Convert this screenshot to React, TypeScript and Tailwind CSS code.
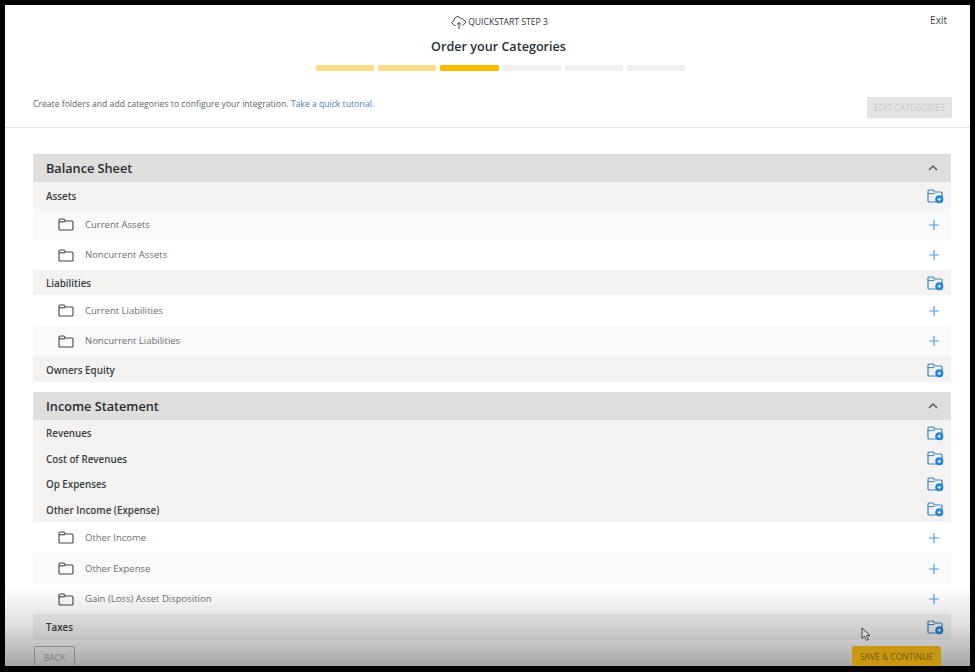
const font = { fontFamily: '"Open Sans", "Noto Sans", sans-serif' };

function Folder() {
  return (
    <svg width="16" height="13" viewBox="0 0 16 13" fill="none" stroke="#444" strokeWidth="1.1" className="shrink-0">
      <path d="M1 11V2.2C1 1.5 1.5 1 2.2 1h3.2c.6 0 1 .3 1.2 .8l.5 1.2h6.7c.7 0 1.2 .5 1.2 1.2V11c0 .6-.5 1-1.2 1H2.2C1.5 12 1 11.6 1 11z" />
      <path d="M1 3.8h6" />
    </svg>
  );
}

function FolderPlus() {
  return (
    <svg width="17" height="15" viewBox="0 0 17 15" fill="none" className="shrink-0">
      <path d="M1 12V2.2C1 1.5 1.5 1 2.2 1h3.4c.6 0 1 .3 1.2 .8l.4 1.2h6.6c.7 0 1.2 .5 1.2 1.2V12c0 .6-.5 1-1.2 1H2.2C1.5 13 1 12.6 1 12z" stroke="#3585bf" strokeWidth="1.2" />
      <path d="M1 4.6h6.4" stroke="#3585bf" strokeWidth="1" />
      <circle cx="12.3" cy="10.3" r="4" fill="#1f86d6" />
      <path d="M12.3 8.4v3.8M10.4 10.3h3.8" stroke="#fff" strokeWidth="0.9" />
    </svg>
  );
}

function Plus() {
  return (
    <svg width="10" height="10" viewBox="0 0 10 10" fill="none" stroke="#4f9fe0" strokeWidth="1.2" className="shrink-0">
      <path d="M5 0v10M0 5h10" />
    </svg>
  );
}

function Chevron() {
  return (
    <svg width="10" height="6" viewBox="0 0 10 6" fill="none" stroke="#555" strokeWidth="1.3">
      <path d="M1 5l4-4 4 4" />
    </svg>
  );
}

function Cloud() {
  return (
    <svg width="16" height="15" viewBox="0 0 16 15" fill="none" stroke="#444" strokeWidth="1" className="shrink-0">
      <path d="M4.6 10.5H3.4L.7 7.8l2.1-2.6L4.2 2.6 7 1.4l3.6 2.4 .9-.1 3.6 3.4-3.4 3.4h-.5" />
      <path d="M8 14V7.5M5.8 9.6 8 7.5l2.2 2.1" />
    </svg>
  );
}

function Section({ title }: { title: string }) {
  return (
    <div className="flex h-[28px] items-center justify-between bg-[#dfdedc] pr-[13px] pl-[13px]">
      <span className="pt-[1px] text-[12.7px] font-semibold text-[#272b33]">{title}</span>
      <Chevron />
    </div>
  );
}

function Group({ label, h, raised }: { label: string; h: string; raised?: boolean }) {
  return (
    <div className={`flex ${h} items-center justify-between bg-[#f3f2f0] pr-[7px] pl-[13px] ${raised ? "pt-[0px]" : "pt-[2px]"}`}>
      <span className={`text-[9.8px] font-semibold text-[#3a3e44] ${raised ? "pt-[3px]" : "pt-[2px]"}`}>{label}</span>
      <FolderPlus />
    </div>
  );
}

function Item({ label, shaded, h }: { label: string; shaded?: boolean; h: string }) {
  return (
    <div className={`flex ${h} items-center justify-between pr-[12px] pl-[25px] ${shaded ? "bg-[#f9f9f9]" : "bg-white"}`}>
      <div className="flex items-center gap-[11px]">
        <Folder />
        <span className="pt-[1px] text-[9.5px] font-normal text-[#6d6f73]">{label}</span>
      </div>
      <Plus />
    </div>
  );
}

export default function App() {
  const bars = ["bg-[#fedd89]", "bg-[#fedd89]", "bg-[#fdbb00]", "bg-[#f0f0f0]", "bg-[#f0f0f0]", "bg-[#f0f0f0]"];
  return (
    <div className="h-[672px] w-[975px] overflow-hidden bg-black pt-[5px] pr-[5px] pb-[6px] pl-[5px]" style={font}>
      <div className="relative h-full overflow-hidden bg-white">
        <div className="h-[123px] border-b border-[#e6e6e6]">
          <div className="flex h-[32px] items-center justify-center gap-[1px] pt-[2px] pl-[24px]">
            <Cloud />
            <span className="text-[8.6px] font-normal text-[#2f333a]">QUICKSTART STEP 3</span>
          </div>
          <div className="pl-[22px] text-center text-[12.6px] leading-[20px] font-semibold text-[#2b3038]">Order your Categories</div>
          <div className="mt-[8px] flex justify-center gap-[4px] pl-[26px]">
            {bars.map((c, i) => (
              <div key={i} className={`h-[6px] w-[58.2px] rounded-[1px] ${c}`} />
            ))}
          </div>
          <div className="mt-[27px] flex items-start justify-between pr-[18px] pl-[28px]">
            <p className="text-[8.65px] leading-[12px] text-[#5e6268]">
              Create folders and add categories to configure your integration. <span className="text-[#4a7fb5]">Take a quick tutorial.</span>
            </p>
            <div className="-mt-[1px] flex h-[21px] w-[85px] items-center justify-center rounded-[1px] bg-[#e3e3e3] pt-[1px] text-[8.6px] text-[#c9c9c9]">EDIT CATEGORIES</div>
          </div>
        </div>

        <div className="absolute top-0 right-[23px] text-[10px] leading-[30px] font-medium text-[#3b3f46]">Exit</div>

        <div className="mt-[26px] mr-[19px] ml-[28px]">
          <Section title="Balance Sheet" />
          <Group label="Assets" h="h-[27px]" />
          <Item label="Current Assets" shaded h="h-[31px]" />
          <Item label="Noncurrent Assets" h="h-[30px]" />
          <Group label="Liabilities" h="h-[25px]" />
          <Item label="Current Liabilities" h="h-[31px]" />
          <Item label="Noncurrent Liabilities" shaded h="h-[30px]" />
          <Group label="Owners Equity" h="h-[26px]" />
          <div className="h-[10px]" />
          <Section title="Income Statement" />
          <Group label="Revenues" h="h-[26px]" raised />
          <Group label="Cost of Revenues" h="h-[25px]" raised />
          <Group label="Op Expenses" h="h-[26px]" raised />
          <Group label="Other Income (Expense)" h="h-[25px]" raised />
          <Item label="Other Income" h="h-[31px]" />
          <Item label="Other Expense" shaded h="h-[31px]" />
          <Item label="Gain (Loss) Asset Disposition" h="h-[30px]" />
          <Group label="Taxes" h="h-[26px]" raised />
        </div>

        <div className="pointer-events-none absolute right-0 bottom-0 left-0 h-[80px] bg-gradient-to-b from-[#00000000] via-[#00000022] to-[#00000059]" />
        <div className="absolute right-0 bottom-0 left-0 flex h-[29px] items-start justify-between border-t border-[#c4c4c4] pt-[8px] pr-[29px] pl-[29px]">
          <div className="flex h-[23px] w-[41px] items-center justify-center rounded-t-[2px] border border-b-0 border-[#8a8a8a] text-[8.5px] text-[#7f7f7f]">BACK</div>
          <div className="flex h-[23px] w-[89px] items-center justify-center rounded-t-[2px] bg-[#c9980f] text-[8.5px] text-[#6e5a1c]">SAVE &amp; CONTINUE</div>
        </div>

        <svg width="11" height="15" viewBox="0 0 11 15" className="absolute top-[622px] left-[856px]" fill="#d8d8d8" stroke="#333" strokeWidth="0.9">
          <path d="M1 1v10.5l2.6-2.3 1.8 4.2 2-.9-1.8-4.1h3.4z" />
        </svg>
      </div>
    </div>
  );
}
